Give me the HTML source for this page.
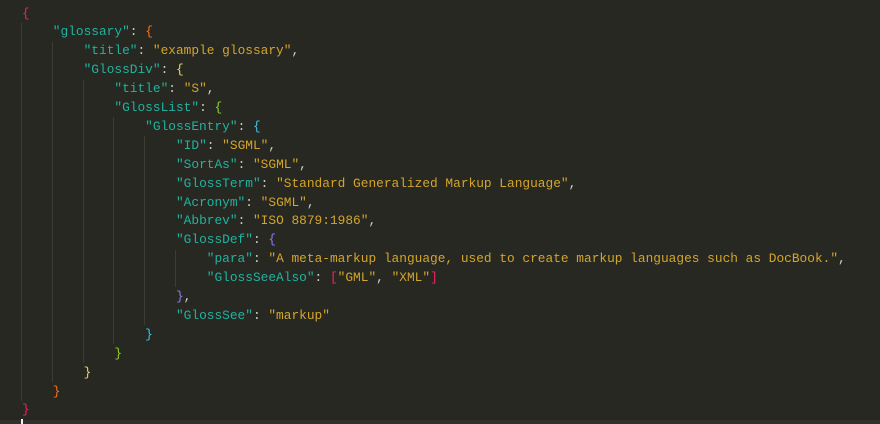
<!DOCTYPE html>
<html><head><meta charset="utf-8"><style>
html,body{margin:0;padding:0;background:#272822;width:880px;height:424px;overflow:hidden}
#c{position:relative;width:880px;height:424px;font-family:"Liberation Mono",monospace;font-size:12.83px;line-height:18.9px;color:#d0d0c8}
.l{position:absolute;left:22px;white-space:pre;height:18.9px}
.k{color:#1fb3a0}.s{color:#d4a52a}
.b0{color:#e8265e}.b1{color:#f5731f}.b2{color:#e3d66a}.b3{color:#8ed12b}.b4{color:#3cc4e8}.b5{color:#8b7cf0}.br{color:#e8265e}
.g{position:absolute;width:1px;background:#3c3c35}
</style></head><body><div id="c">
<div class="g" style="left:21px;top:22.9px;height:378px"></div>
<div class="g" style="left:52px;top:41.8px;height:340px"></div>
<div class="g" style="left:83px;top:79.6px;height:283.5px"></div>
<div class="g" style="left:113px;top:117.4px;height:226.8px"></div>
<div class="g" style="left:144px;top:136.3px;height:189px"></div>
<div class="g" style="left:175px;top:249.7px;height:37.8px"></div>
<div style="position:absolute;left:0;top:420px;width:880px;height:4px;background:#31312b"></div>
<div style="position:absolute;left:21px;top:419px;width:2px;height:5px;background:#f0f0f0"></div>
<div class="l" style="top:4.5px"><span class="b0">{</span></div>
<div class="l" style="top:23.4px">    <span class="k">"glossary"</span>: <span class="b1">{</span></div>
<div class="l" style="top:42.3px">        <span class="k">"title"</span>: <span class="s">"example glossary"</span>,</div>
<div class="l" style="top:61.2px">        <span class="k">"GlossDiv"</span>: <span class="b2">{</span></div>
<div class="l" style="top:80.1px">            <span class="k">"title"</span>: <span class="s">"S"</span>,</div>
<div class="l" style="top:99px">            <span class="k">"GlossList"</span>: <span class="b3">{</span></div>
<div class="l" style="top:117.9px">                <span class="k">"GlossEntry"</span>: <span class="b4">{</span></div>
<div class="l" style="top:136.8px">                    <span class="k">"ID"</span>: <span class="s">"SGML"</span>,</div>
<div class="l" style="top:155.7px">                    <span class="k">"SortAs"</span>: <span class="s">"SGML"</span>,</div>
<div class="l" style="top:174.6px">                    <span class="k">"GlossTerm"</span>: <span class="s">"Standard Generalized Markup Language"</span>,</div>
<div class="l" style="top:193.5px">                    <span class="k">"Acronym"</span>: <span class="s">"SGML"</span>,</div>
<div class="l" style="top:212.4px">                    <span class="k">"Abbrev"</span>: <span class="s">"ISO 8879:1986"</span>,</div>
<div class="l" style="top:231.3px">                    <span class="k">"GlossDef"</span>: <span class="b5">{</span></div>
<div class="l" style="top:250.2px">                        <span class="k">"para"</span>: <span class="s">"A meta-markup language, used to create markup languages such as DocBook."</span>,</div>
<div class="l" style="top:269.1px">                        <span class="k">"GlossSeeAlso"</span>: <span class="br">[</span><span class="s">"GML"</span>, <span class="s">"XML"</span><span class="br">]</span></div>
<div class="l" style="top:288px">                    <span class="b5">}</span>,</div>
<div class="l" style="top:306.9px">                    <span class="k">"GlossSee"</span>: <span class="s">"markup"</span></div>
<div class="l" style="top:325.8px">                <span class="b4">}</span></div>
<div class="l" style="top:344.7px">            <span class="b3">}</span></div>
<div class="l" style="top:363.6px">        <span class="b2">}</span></div>
<div class="l" style="top:382.5px">    <span class="b1">}</span></div>
<div class="l" style="top:401.4px"><span class="b0">}</span></div>
</div></body></html>
